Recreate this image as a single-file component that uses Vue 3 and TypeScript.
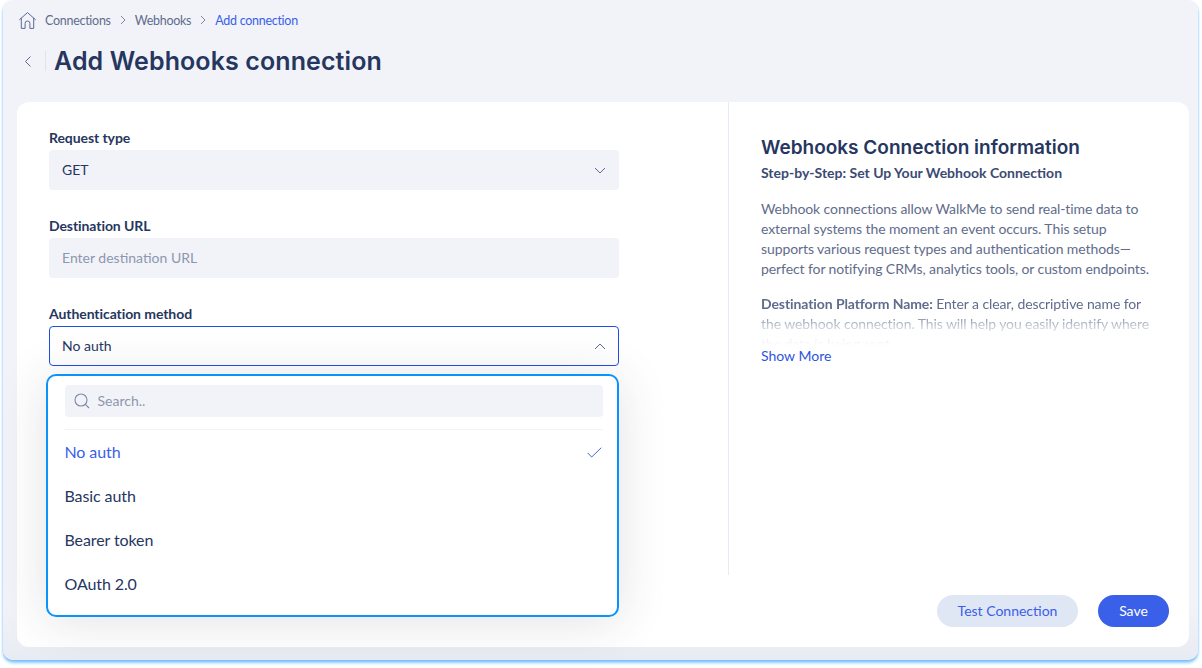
<script setup lang="ts">
import { ref } from 'vue';

const authOptions = ['No auth', 'Basic auth', 'Bearer token', 'OAuth 2.0'];
const selectedAuth = ref('No auth');
</script>

<template>
  <div class="page">
    <div class="frame">
      <nav class="crumbs">
        <svg class="crumbs__home" width="17" height="17" viewBox="0 0 17 17" fill="none">
          <path d="M.6 7.6 8.5.6l7.9 7M2.3 6.2v10.2h3.8v-5a2.4 2.4 0 0 1 4.8 0v5h3.8V6.2" stroke="#5b6c92" stroke-width="1" stroke-linejoin="round" stroke-linecap="round" />
        </svg>
        <span class="crumbs__item">Connections</span>
        <svg class="crumbs__sep" width="6" height="10" viewBox="0 0 6 10" fill="none"><path d="M1 1l4 4-4 4" stroke="#7d88a5" /></svg>
        <span class="crumbs__item">Webhooks</span>
        <svg class="crumbs__sep" width="6" height="10" viewBox="0 0 6 10" fill="none"><path d="M1 1l4 4-4 4" stroke="#7d88a5" /></svg>
        <span class="crumbs__item crumbs__item--active">Add connection</span>
      </nav>

      <header class="head">
        <button class="head__back" type="button">
          <svg width="6" height="11" viewBox="0 0 6 11" fill="none"><path d="M5.5.5l-5 5 5 5" stroke="#5b6c92" /></svg>
        </button>
        <h1 class="head__title">Add Webhooks connection</h1>
      </header>

      <main class="card">
        <div class="card__body">
          <section class="form">
            <div class="field">
              <label class="field__label">Request type</label>
              <div class="control">
                <span>GET</span>
                <svg width="12" height="7" viewBox="0 0 12 7" fill="none"><path d="M1 1l5 5 5-5" stroke="#5b6c92" /></svg>
              </div>
            </div>
            <div class="field">
              <label class="field__label">Destination URL</label>
              <div class="control control--empty"><span>Enter destination URL</span></div>
            </div>
            <div class="field">
              <label class="field__label">Authentication method</label>
              <div class="control control--open">
                <span>{{ selectedAuth }}</span>
                <svg width="12" height="7" viewBox="0 0 12 7" fill="none"><path d="M1 6l5-5 5 5" stroke="#5b6c92" /></svg>
              </div>
              <div class="menu">
                <div class="menu__search">
                  <svg width="16" height="16" viewBox="0 0 16 16" fill="none">
                    <circle cx="7" cy="7" r="6" stroke="#7d88a5" stroke-width="1.1" />
                    <path d="M11.4 11.4 15 15" stroke="#7d88a5" stroke-width="1.1" />
                  </svg>
                  <span>Search..</span>
                </div>
                <ul class="menu__list">
                  <li
                    v-for="option in authOptions"
                    :key="option"
                    class="menu__item"
                    :class="{ 'menu__item--selected': option === selectedAuth }"
                  >
                    <span>{{ option }}</span>
                    <svg v-if="option === selectedAuth" width="15" height="11" viewBox="0 0 15 11" fill="none"><path d="M.7 6l4 4L14.3.7" stroke="#2f55dd" stroke-width="0.9" /></svg>
                  </li>
                </ul>
              </div>
            </div>
          </section>

          <aside class="info">
            <h2 class="info__title">Webhooks Connection information</h2>
            <h3 class="info__sub">Step-by-Step: Set Up Your Webhook Connection</h3>
            <p class="info__text">
              Webhook connections allow WalkMe to send real-time data to external systems the moment an event occurs. This setup supports various request types and authentication methods—perfect for notifying CRMs, analytics tools, or custom endpoints.
            </p>
            <p class="info__text info__text--fade">
              <b>Destination Platform Name:</b> Enter a clear, descriptive name for the webhook connection. This will help you easily identify where the data is being sent.
            </p>
            <a class="info__more">Show More</a>
          </aside>
        </div>

        <footer class="card__foot">
          <button class="btn btn--soft" type="button">Test Connection</button>
          <button class="btn btn--primary" type="button">Save</button>
        </footer>
      </main>
    </div>
  </div>
</template>

<style>
html,
body {
  margin: 0;
  background: #fff;
}
</style>

<style scoped>
.page {
  height: 668px;
  overflow: hidden;
}
.frame {
  box-sizing: border-box;
  width: 1195px;
  height: 660px;
  margin-left: 3px;
  padding: 0 9px 13px 14px;
  display: flex;
  flex-direction: column;
  background: linear-gradient(to bottom, #f1f3f9 92%, #e9ebf2 100%);
  border-radius: 10px;
  box-shadow: 0 3px 3px rgba(70, 170, 255, 0.6), 0 1px 2px rgba(70, 170, 255, 0.45);
  font-family: Lato, 'Open Sans', sans-serif;
  color: #26365f;
}

/* breadcrumbs */
.crumbs {
  height: 40px;
  display: flex;
  align-items: center;
  padding-left: 2px;
  font-size: 12.5px;
  letter-spacing: -0.28px;
}
.crumbs__home {
  margin-right: 9px;
}
.crumbs__item {
  color: #5f6c8c;
}
.crumbs__item--active {
  color: #3a5fe8;
}
.crumbs__sep {
  margin: 0 9px;
}

/* page title */
.head {
  height: 42px;
  display: flex;
  align-items: center;
}
.head__back {
  box-sizing: content-box;
  width: 20px;
  height: 20px;
  padding: 0 0 0 8px;
  display: flex;
  align-items: center;
  background: none;
  border: 0;
  border-right: 1px solid #dfe3ee;
}
.head__title {
  margin: 0 0 0 8px;
  font-family: Inter, sans-serif;
  font-size: 25px;
  font-weight: 600;
  letter-spacing: 0.1px;
  color: #26365f;
}

/* main card */
.card {
  margin-top: 20px;
  flex: 1;
  display: flex;
  flex-direction: column;
  background: #fff;
  border-radius: 12px;
}
.card__body {
  height: 473px;
  display: flex;
}
.card__foot {
  display: flex;
  justify-content: flex-end;
  gap: 20px;
  padding: 20px 20px 0 0;
}

/* form column */
.form {
  box-sizing: border-box;
  width: 712px;
  padding: 28px 0 0 32px;
  border-right: 1px solid #e6ebf7;
}
.field {
  position: relative;
  width: 570px;
  margin-bottom: 28px;
}
.field__label {
  display: block;
  height: 20px;
  line-height: 16px;
  font-size: 14px;
  font-weight: 700;
  letter-spacing: -0.08px;
  color: #26365f;
}
.control {
  box-sizing: border-box;
  height: 40px;
  padding: 0 13px;
  display: flex;
  align-items: center;
  justify-content: space-between;
  background: #f1f3f9;
  border-radius: 4px;
  font-size: 14px;
  color: #26365f;
}
.control span {
  margin-bottom: 2px;
}
.control--empty {
  color: #8d97ae;
}
.control--open {
  background: #fff;
  border: 1px solid #1f4fe0;
  padding: 0 12px;
}

/* dropdown overlay */
.menu {
  position: absolute;
  top: calc(100% + 8px);
  left: -3px;
  right: 0;
  z-index: 2;
  box-sizing: border-box;
  height: 243px;
  padding: 9px 14px 0 16.5px;
  background: #fff;
  border: 2.5px solid #0a94fb;
  border-radius: 10px;
  box-shadow: 0 4px 50px rgba(40, 50, 70, 0.14);
}
.menu__search {
  height: 32px;
  padding: 0 9px;
  display: flex;
  align-items: center;
  gap: 8px;
  background: #f1f3f9;
  border-radius: 4px;
  font-size: 14px;
  color: #8d97ae;
}
.menu__search span {
  margin-bottom: 2px;
}
.menu__list {
  list-style: none;
  margin: 12px 0 0;
  padding: 0;
  border-top: 1px solid #f1f3f7;
}
.menu__item {
  height: 44px;
  padding-right: 1.5px;
  display: flex;
  align-items: center;
  justify-content: space-between;
  font-size: 16px;
  letter-spacing: -0.1px;
  color: #26365f;
}
.menu__item span {
  margin-bottom: 2px;
}
.menu__item--selected {
  color: #3a5fe8;
}

/* info column */
.info {
  flex: 1;
  padding: 34px 33px 0 32px;
  font-size: 14px;
  letter-spacing: -0.09px;
  color: #5f6c8c;
}
.info__title {
  margin: 0;
  height: 24px;
  line-height: 24px;
  font-family: Inter, sans-serif;
  font-size: 19px;
  font-weight: 600;
  letter-spacing: 0;
  white-space: nowrap;
  color: #26365f;
}
.info__sub {
  margin: 3px 0 0;
  height: 20px;
  line-height: 20px;
  font-size: 14px;
  font-weight: 700;
  letter-spacing: 0;
  color: #3b4a73;
}
.info__text {
  margin: 16px 0 0;
  line-height: 20px;
}
.info__text--fade {
  margin-top: 15px;
  height: 52px;
  overflow: hidden;
  -webkit-mask-image: linear-gradient(to bottom, #000 35%, rgba(0, 0, 0, 0.35) 62%, rgba(0, 0, 0, 0.1) 88%, transparent 100%);
  mask-image: linear-gradient(to bottom, #000 35%, rgba(0, 0, 0, 0.35) 62%, rgba(0, 0, 0, 0.1) 88%, transparent 100%);
}
.info__more {
  display: block;
  margin-top: 0;
  line-height: 20px;
  letter-spacing: 0;
  color: #2f55dd;
}

/* footer buttons */
.btn {
  height: 32px;
  padding: 0 0 2px;
  border: 0;
  border-radius: 16px;
  font-family: inherit;
  font-size: 14px;
}
.btn--soft {
  width: 141px;
  background: #dfe6f4;
  color: #3a5fe8;
}
.btn--primary {
  width: 71px;
  background: #3a5fe8;
  color: #fff;
}
</style>
